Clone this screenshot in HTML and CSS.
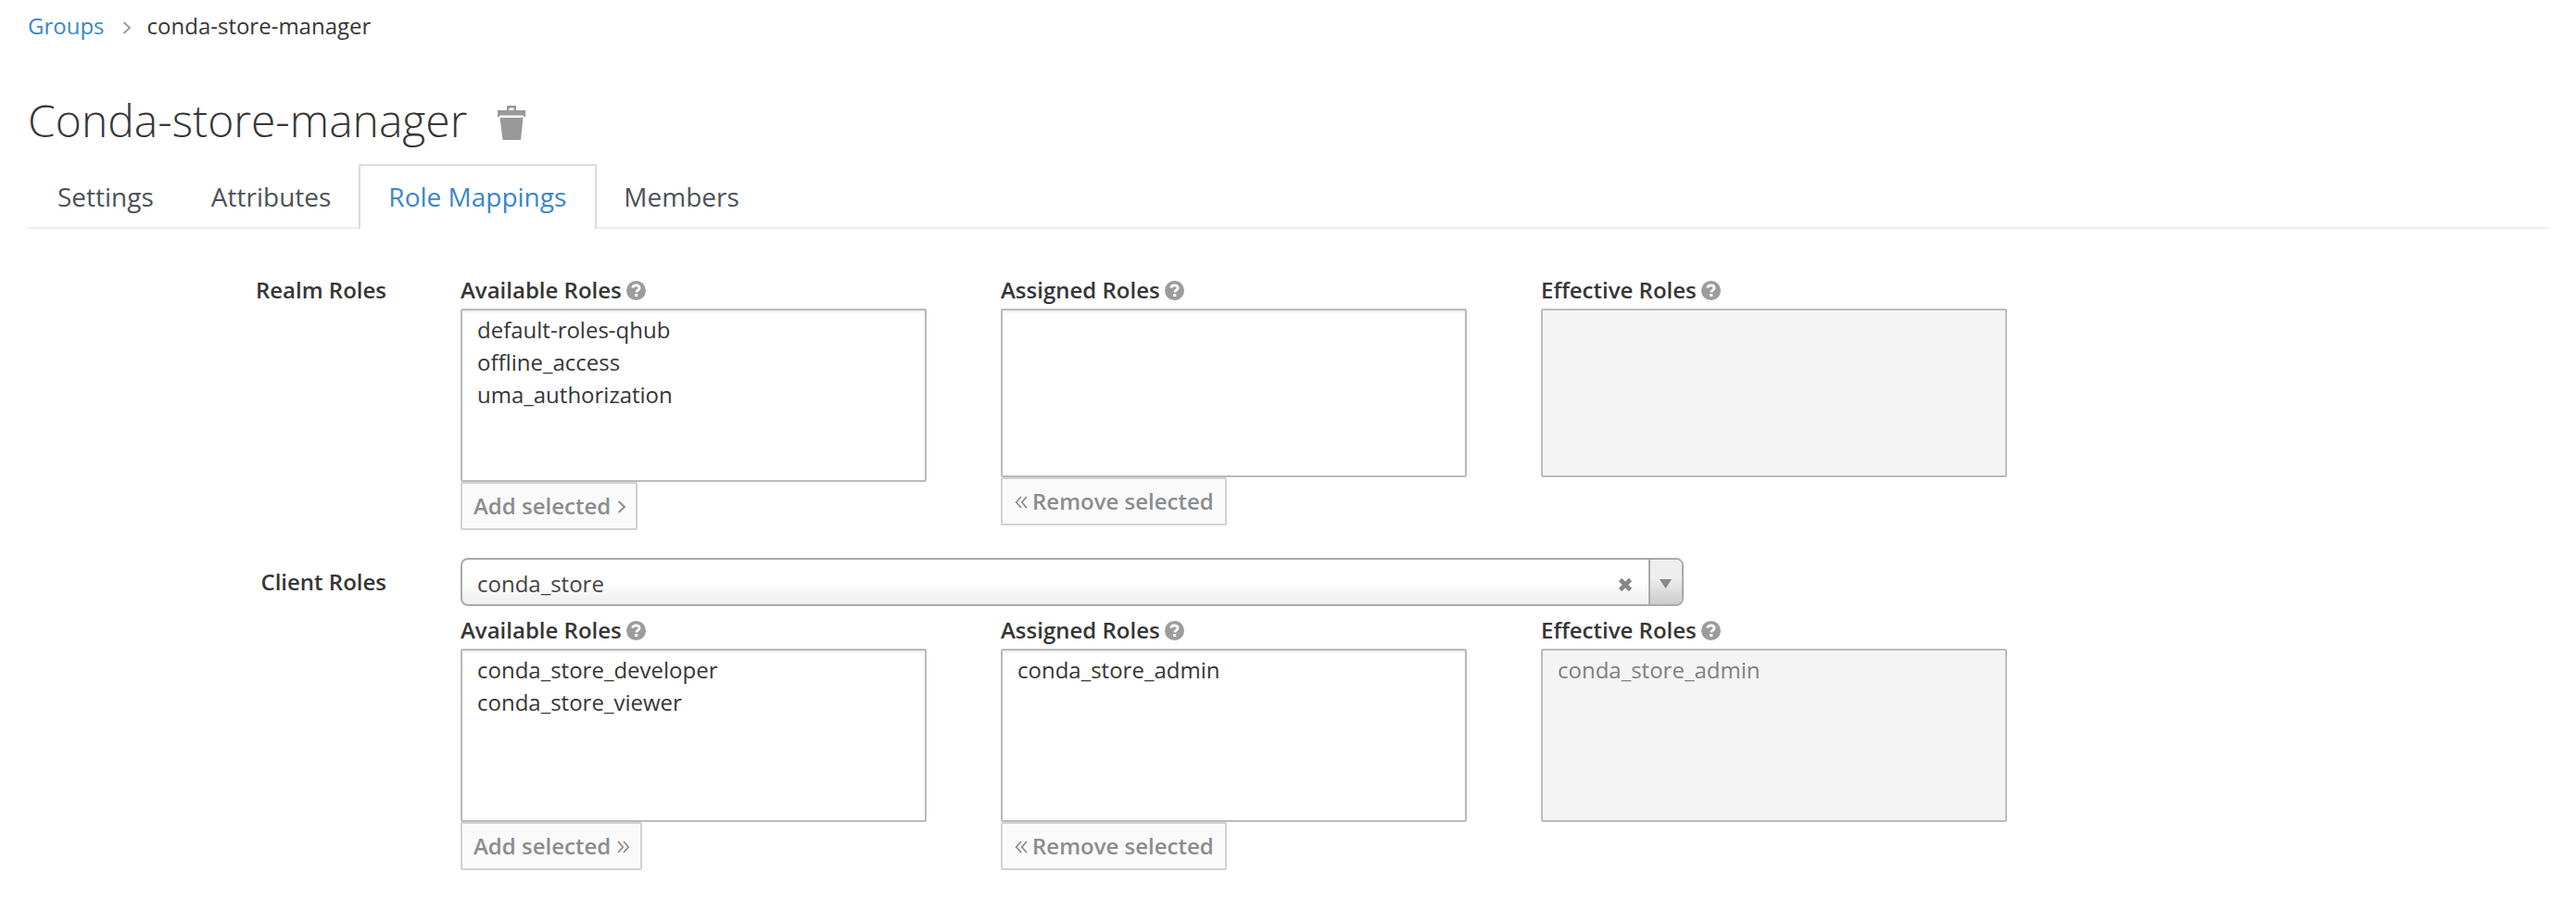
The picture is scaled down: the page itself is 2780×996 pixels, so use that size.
FILE: index.html
```html
<!DOCTYPE html>
<html lang="en">
<head>
<meta charset="utf-8">
<title>Conda-store-manager</title>
<link rel="stylesheet" href="styles.css">
</head>
<body>
<svg class="defs" width="0" height="0">
  <symbol id="help" viewBox="0 0 20 20">
    <circle cx="10" cy="10" r="10" fill="#9c9c9c"/>
    <path d="M6.4 7.3C6.7 5.2 8.1 4.6 10 4.6C12 4.6 13.4 5.7 13.4 7.4C13.4 9.8 10.4 9.4 10.2 11.8" fill="none" stroke="#fff" stroke-width="2.6"/>
    <rect x="8.7" y="13.4" width="3" height="2.8" fill="#fff"/>
  </symbol>
  <symbol id="right" viewBox="0 0 10 14"><path d="M1.5 1L8 7L1.5 13" fill="none" stroke="currentColor" stroke-width="1.9"/></symbol>
  <symbol id="dright" viewBox="0 0 14 14"><path d="M1 1L6.2 7L1 13M7 1L12.2 7L7 13" fill="none" stroke="currentColor" stroke-width="1.8"/></symbol>
  <symbol id="dleft" viewBox="0 0 14 14"><path d="M13 1L7.8 7L13 13M7 1L1.8 7L7 13" fill="none" stroke="currentColor" stroke-width="1.8"/></symbol>
</svg>
<main class="page">
  <nav class="crumbs">
    <a class="link">Groups</a>
    <svg class="sep"><use href="#right"/></svg>
    <span>conda-store-manager</span>
  </nav>
  <header class="heading">
    <h1 class="title">Conda-store-manager</h1>
    <svg class="trash" viewBox="0 0 30 37" fill="#999"><path fill-rule="evenodd" d="M0 5H10V0H20V5H30V12H28V10.500H2V12H0ZM12.500 2.500V5H17.500V2.500Z"/><path d="M2.500 13H27.500L25 37H5.500Z"/></svg>
  </header>
  <ul class="tabs">
    <li class="tab">Settings</li>
    <li class="tab">Attributes</li>
    <li class="tab active">Role Mappings</li>
    <li class="tab">Members</li>
  </ul>
  <section class="row realm">
    <div class="row-label">Realm Roles</div>
    <div class="cols">
      <div class="col">
        <div class="label">Available Roles<svg class="help"><use href="#help"/></svg></div>
        <div class="list"><span>default-roles-qhub</span><span>offline_access</span><span>uma_authorization</span></div>
        <div class="btn add">Add selected<svg class="chev"><use href="#right"/></svg></div>
      </div>
      <div class="col">
        <div class="label">Assigned Roles<svg class="help"><use href="#help"/></svg></div>
        <div class="list short"></div>
        <div class="btn remove"><svg class="dchev"><use href="#dleft"/></svg>Remove selected</div>
      </div>
      <div class="col">
        <div class="label">Effective Roles<svg class="help"><use href="#help"/></svg></div>
        <div class="list short disabled"></div>
      </div>
    </div>
  </section>
  <section class="row client">
    <div class="row-label">Client Roles</div>
    <div class="client-body">
      <div class="select">
        <span class="value">conda_store</span>
        <svg class="clear" viewBox="0 0 16 16"><path d="M2.500 2.500L13.500 13.500M13.500 2.500L2.500 13.500" stroke="#878787" stroke-width="4.600"/></svg>
        <div class="arrow"><svg class="tri" viewBox="0 0 13 10"><path d="M0 0H13L6.500 10Z" fill="#878787"/></svg></div>
      </div>
      <div class="cols">
        <div class="col">
          <div class="label">Available Roles<svg class="help"><use href="#help"/></svg></div>
          <div class="list"><span>conda_store_developer</span><span>conda_store_viewer</span></div>
          <div class="btn add double">Add selected<svg class="dchev"><use href="#dright"/></svg></div>
        </div>
        <div class="col">
          <div class="label">Assigned Roles<svg class="help"><use href="#help"/></svg></div>
          <div class="list"><span>conda_store_admin</span></div>
          <div class="btn remove"><svg class="dchev"><use href="#dleft"/></svg>Remove selected</div>
        </div>
        <div class="col">
          <div class="label">Effective Roles<svg class="help"><use href="#help"/></svg></div>
          <div class="list disabled"><span>conda_store_admin</span></div>
        </div>
      </div>
    </div>
  </section>
</main>
</body>
</html>
```
FILE: styles.css
```css
* { box-sizing: border-box; }
body { margin: 0; background: #fff; color: #363636; font: 24px/34px "Open Sans", sans-serif; }
svg { display: block; flex: none; }
.defs { position: absolute; }
.page { padding: 11px 30px 0; }
.crumbs { display: flex; align-items: center; height: 34px; }
.link { color: #3a87c8; }
.sep { width: 10px; height: 14px; margin: 3px 17px 0 19px; color: #9c9c9c; }
.heading { display: flex; align-items: flex-start; height: 132px; padding-top: 52px; }
.title { margin: 0; font-size: 48px; line-height: 66px; font-weight: 300; }
.trash { width: 30px; height: 37px; margin: 17px 0 0 33px; }
.tabs { display: flex; margin: 0; padding: 0; list-style: none; height: 70px; border-bottom: 2px solid #ededed; font-size: 28px; line-height: 40px; color: #4d5258; }
.tab { height: 70px; padding: 13px 30px 0; border: 2px solid transparent; border-bottom: 0; margin-right: -2px; }
.tab.active { padding-right: 31px; margin-right: -3px; color: #3a87c8; background: #fff; border-color: #dcdcdc; }
.row { display: flex; }
.realm { margin-top: 49px; height: 306px; }
.row-label { width: 387px; margin-right: 80px; text-align: right; font-weight: 600; line-height: 34px; }
.cols { display: flex; gap: 80px; }
.col { width: 503px; }
.label { display: flex; height: 37px; font-weight: 600; }
.help { width: 21px; height: 21px; margin: 7px 0 0 5.5px; }
.list { display: flex; flex-direction: column; height: 187px; padding: 3px 16px; border: 2px solid #bbb; border-radius: 2px; box-shadow: inset 0 2px 2px rgba(3,3,3,.075); line-height: 35px; }
.list.short { height: 182px; }
.list.disabled { background: #f4f4f4; color: #808080; box-shadow: none; }
.btn { display: flex; align-items: center; width: 191px; height: 52px; padding: 0 12px; border: 2px solid #d1d1d1; border-radius: 2px; background: #fafafa; color: #8b8d8f; font-weight: 600; white-space: nowrap; }
.btn.double { width: 196px; }
.btn.remove { width: 244px; }
.chev { width: 10px; height: 14px; margin: 2px 0 0 7px; }
.dchev { width: 14px; height: 14px; margin: 2px 0 0 7px; }
.remove .dchev { margin: 2px 5px 0 1px; }
.select { display: flex; align-items: center; width: 1320px; height: 52px; margin-bottom: 9px; padding-left: 16px; border: 2px solid #aaa; border-radius: 8px; background: linear-gradient(to top, #eee 0%, #fff 50%); color: #444; overflow: hidden; }
.value { flex: 1; padding-top: 3px; }
.clear { width: 16px; height: 16px; margin: 6px 17px 0 0; }
.arrow { width: 36px; height: 48px; border-left: 2px solid #aaa; background: linear-gradient(to top, #ccc 0%, #eee 60%); }
.tri { width: 13px; height: 10px; margin: 21px 0 0 10px; }
.client .row-label { padding-top: 9px; }
```
